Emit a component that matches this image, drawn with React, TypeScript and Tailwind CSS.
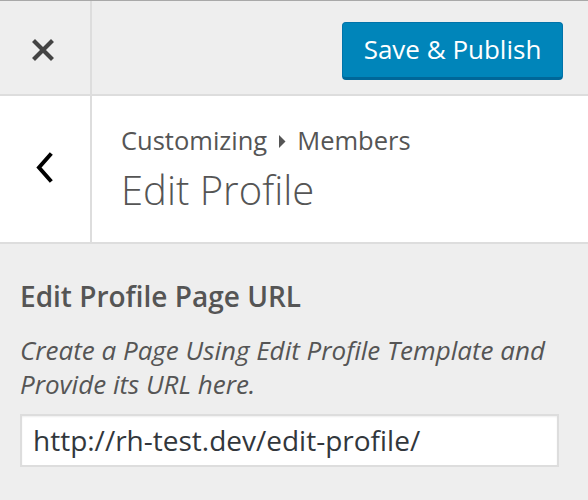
import React from "react";

export default function App() {
  return (
    <div
      className="w-[588px] h-[500px] overflow-hidden bg-[#eeeeee] text-[#555]"
      style={{ fontFamily: '"Open Sans", "Noto Sans", sans-serif' }}
    >
      {/* Header */}
      <div className="box-border h-[96px] flex border-t border-t-[#a8a8a8] border-b-2 border-b-[#dddddd] bg-[#eeeeee]">
        <div className="w-[92px] shrink-0 border-r-2 border-r-[#dddddd] flex items-center justify-center pt-[4px] pr-[4px]">
          <svg width="22" height="22" viewBox="0 0 22 22">
            <path d="M3 3 L19 19 M19 3 L3 19" stroke="#444" strokeWidth="4.2" strokeLinecap="square" fill="none" />
          </svg>
        </div>
        <div className="flex-1 flex justify-end items-start pt-[21px] pr-[25px]">
          <button className="box-border w-[221px] h-[58px] rounded-[4px] bg-[#0085ba] border border-[#0073aa] border-b-[3px] border-b-[#006799] text-white text-[26px] leading-none pb-[2px]">
            Save &amp; Publish
          </button>
        </div>
      </div>

      {/* Section title */}
      <div className="box-border h-[148px] flex bg-white border-b-2 border-b-[#dddddd]">
        <div className="w-[92px] shrink-0 border-r-2 border-r-[#dddddd] flex items-center justify-center pb-[3px] pr-[2px]">
          <svg width="18" height="31" viewBox="0 0 18 31">
            <path d="M15 3 L4 15.5 L15 28" stroke="#000" strokeWidth="4" fill="none" strokeLinecap="square" />
          </svg>
        </div>
        <div className="flex-1 pl-[29px] pt-[28px]">
          <div className="flex items-center text-[25.5px] leading-[32px] text-[#555]">
            <span>Customizing</span>
            <svg width="8" height="13" viewBox="0 0 8 13" className="ml-[11px] mr-[11px] mt-[3px]">
              <path d="M1 0 L7.5 6.5 L1 13 Z" fill="#555" />
            </svg>
            <span>Members</span>
          </div>
          <div className="text-[40px] leading-[48px] font-light text-[#555] mt-[10px]">Edit Profile</div>
        </div>
      </div>

      {/* Control */}
      <div className="px-[20px] pt-[34px]">
        <div className="text-[28px] leading-[36px] font-semibold text-[#555]">Edit Profile Page URL</div>
        <div className="mt-[19px] text-[26px] leading-[34px] italic text-[#555]">
          Create a Page Using Edit Profile Template and Provide its URL here.
        </div>
        <div className="mt-[13px] box-border w-[539px] h-[53px] bg-white border-2 border-[#dddddd] shadow-[inset_0_1px_2px_rgba(0,0,0,0.07)] flex items-center pl-[11px] pb-[2px] text-[28px] text-[#32373c]">
          http://rh-test.dev/edit-profile/
        </div>
      </div>
    </div>
  );
}
